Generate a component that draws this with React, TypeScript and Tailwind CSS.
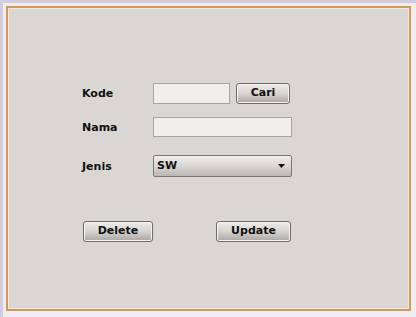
import React from 'react';

const font = { fontFamily: '"DejaVu Sans", Verdana, sans-serif' };

const btn =
  'h-[21px] rounded-[3px] border border-[#6f6d6b] bg-gradient-to-b from-[#eeecea] via-[#d6d3d0] to-[#a9a6a3] text-[11px] font-bold text-[#111] shadow-[inset_0_0_0_1px_#f4f3f1]';

const Label: React.FC<{ text: string }> = ({ text }) => (
  <span className="w-[71px] shrink-0 pt-[2px] text-[11px] font-bold text-[#111]">{text}</span>
);

export default function App() {
  return (
    <div className="w-[416px] h-[317px] bg-[#efedf1] border-t-[3px] border-l-[3px] border-[#d3cbe0] pt-[3px] pl-[3px] pr-[5px] pb-[6px]" style={font}>
      <div className="h-full border-2 border-[#d39a52] bg-[#d9d6d3] shadow-[inset_0_0_0_1px_#ece9e6] pt-[75px] pl-[74px]">
        <div className="flex items-center h-[21px]">
          <Label text="Kode" />
          <div className="w-[77px] h-[21px] bg-[#f1efed] border border-[#a7a4a1]" />
          <button className={`${btn} ml-[6px] w-[54px]`}>Cari</button>
        </div>
        <div className="flex items-center h-[20px] mt-[13px]">
          <Label text="Nama" />
          <div className="w-[139px] h-[20px] bg-[#f1efed] border border-[#a7a4a1]" />
        </div>
        <div className="flex items-center h-[22px] mt-[18px]">
          <Label text="Jenis" />
          <div className="w-[139px] h-[22px] rounded-[2px] border border-[#7a7876] bg-gradient-to-b from-[#f1efed] via-[#d9d6d3] to-[#b9b6b3] flex items-center justify-between pl-[3px] pr-[6px]">
            <span className="text-[11px] font-bold text-[#111]">SW</span>
            <svg width="7" height="4" viewBox="0 0 7 4"><path d="M0 0h7L3.5 4z" fill="#111" /></svg>
          </div>
        </div>
        <div className="flex items-center mt-[44px] pl-[1px]">
          <button className={`${btn} w-[70px]`}>Delete</button>
          <button className={`${btn} ml-[63px] w-[75px]`}>Update</button>
        </div>
      </div>
    </div>
  );
}
